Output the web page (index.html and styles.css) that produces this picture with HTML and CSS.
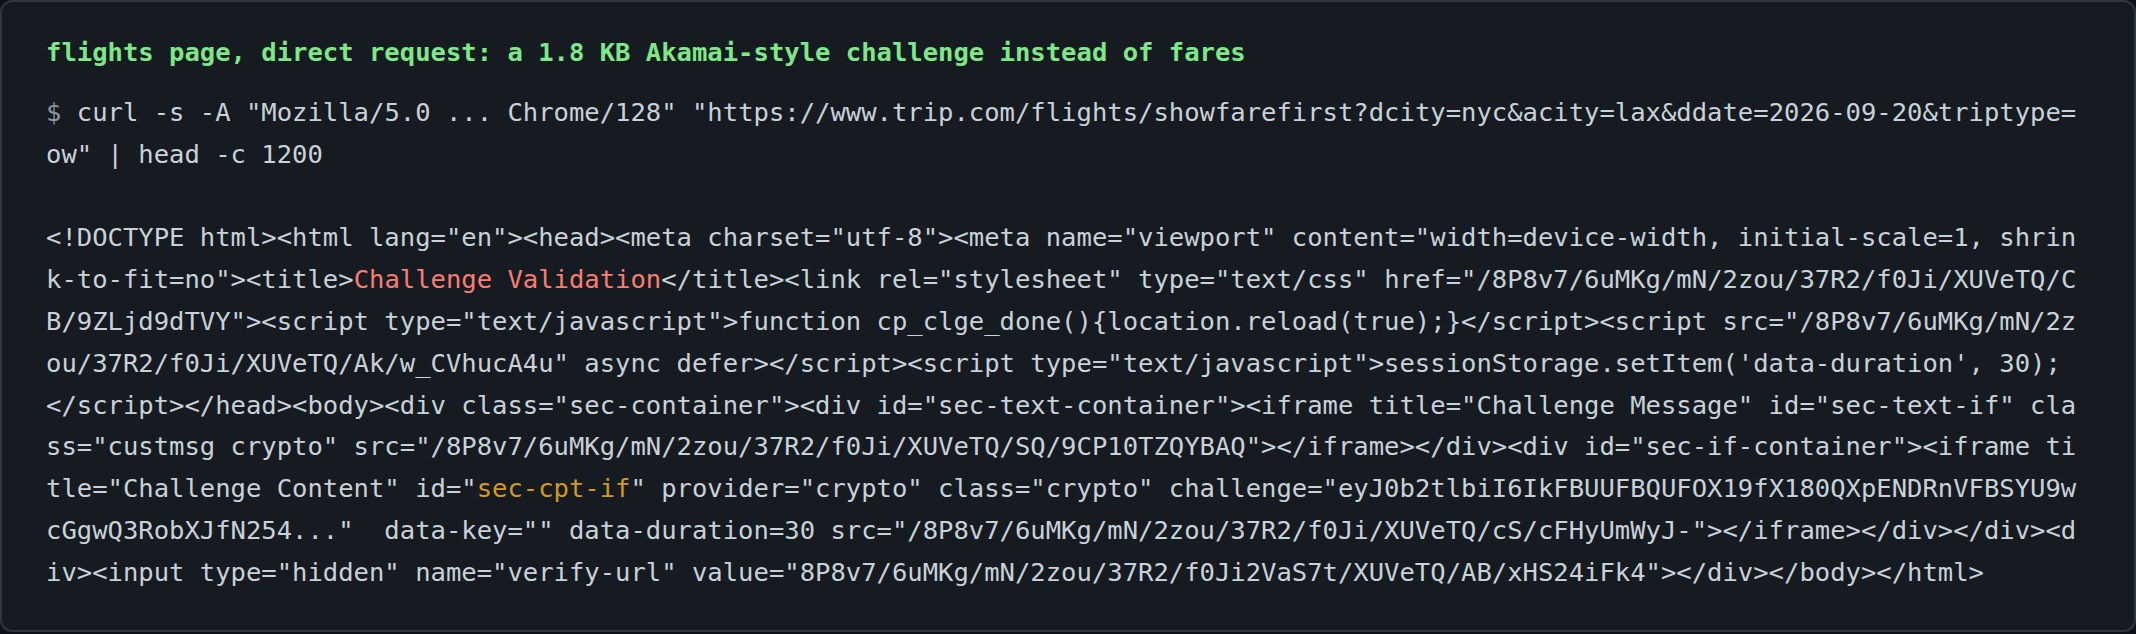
FILE: index.html
```html
<!DOCTYPE html>
<html lang="en">
<head>
<meta charset="utf-8">
<title>Trip.com challenge</title>
<link rel="stylesheet" href="styles.css">
</head>
<body>
<div class="card">
<div class="heading">flights page, direct request: a 1.8 KB Akamai-style challenge instead of fares</div>
<pre class="term"><span class="prompt">$</span> curl -s -A "Mozilla/5.0 ... Chrome/128" "https://www.trip.com/flights/showfarefirst?dcity=nyc&amp;acity=lax&amp;ddate=2026-09-20&amp;triptype=ow" | head -c 1200

&lt;!DOCTYPE html&gt;&lt;html lang="en"&gt;&lt;head&gt;&lt;meta charset="utf-8"&gt;&lt;meta name="viewport" content="width=device-width, initial-scale=1, shrink-to-fit=no"&gt;&lt;title&gt;<span class="red">Challenge Validation</span>&lt;/title&gt;&lt;link rel="stylesheet" type="text/css" href="/8P8v7/6uMKg/mN/2zou/37R2/f0Ji/XUVeTQ/CB/9ZLjd9dTVY"&gt;&lt;script type="text/javascript"&gt;function cp_clge_done(){location.reload(true);}&lt;/script&gt;&lt;script src="/8P8v7/6uMKg/mN/2zou/37R2/f0Ji/XUVeTQ/Ak/w_CVhucA4u" async defer&gt;&lt;/script&gt;&lt;script type="text/javascript"&gt;sessionStorage.setItem('data-duration', 30);&lt;/script&gt;&lt;/head&gt;&lt;body&gt;&lt;div class="sec-container"&gt;&lt;div id="sec-text-container"&gt;&lt;iframe title="Challenge Message" id="sec-text-if" class="custmsg crypto" src="/8P8v7/6uMKg/mN/2zou/37R2/f0Ji/XUVeTQ/SQ/9CP10TZQYBAQ"&gt;&lt;/iframe&gt;&lt;/div&gt;&lt;div id="sec-if-container"&gt;&lt;iframe title="Challenge Content" id="<span class="amber">sec-cpt-if</span>" provider="crypto" class="crypto" challenge="eyJ0b2tlbiI6IkFBUUFBQUFOX19fX180QXpENDRnVFBSYU9wcGgwQ3RobXJfN254..."  data-key="" data-duration=30 src="/8P8v7/6uMKg/mN/2zou/37R2/f0Ji/XUVeTQ/cS/cFHyUmWyJ-"&gt;&lt;/iframe&gt;&lt;/div&gt;&lt;/div&gt;&lt;div&gt;&lt;input type="hidden" name="verify-url" value="8P8v7/6uMKg/mN/2zou/37R2/f0Ji2VaS7t/XUVeTQ/AB/xHS24iFk4"&gt;&lt;/div&gt;&lt;/body&gt;&lt;/html&gt;</pre>
</div>
</body>
</html>
```

FILE: styles.css
```css
html, body {
  margin: 0;
  padding: 0;
  background: #0d1117;
}

.card {
  box-sizing: border-box;
  width: 2136px;
  background: #161b22;
  border: 2px solid #30363d;
  border-radius: 12px;
  padding: 29px 44px 36px 44px;
  font-family: "DejaVu Sans Mono", "Liberation Mono", monospace;
  font-size: 25.56px;
  color: #c9d1d9;
}

.heading {
  font-weight: bold;
  color: #7ee787;
  line-height: 42px;
  margin: 0;
}

.term {
  margin: 19px 0 0 0;
  font-family: inherit;
  font-size: inherit;
  line-height: 41.8px;
  white-space: pre-wrap;
  word-break: break-all;
  color: #c9d1d9;
}

.prompt {
  color: #8b949e;
}

.red {
  color: #ff7b72;
}

.amber {
  color: #d29922;
}
```
